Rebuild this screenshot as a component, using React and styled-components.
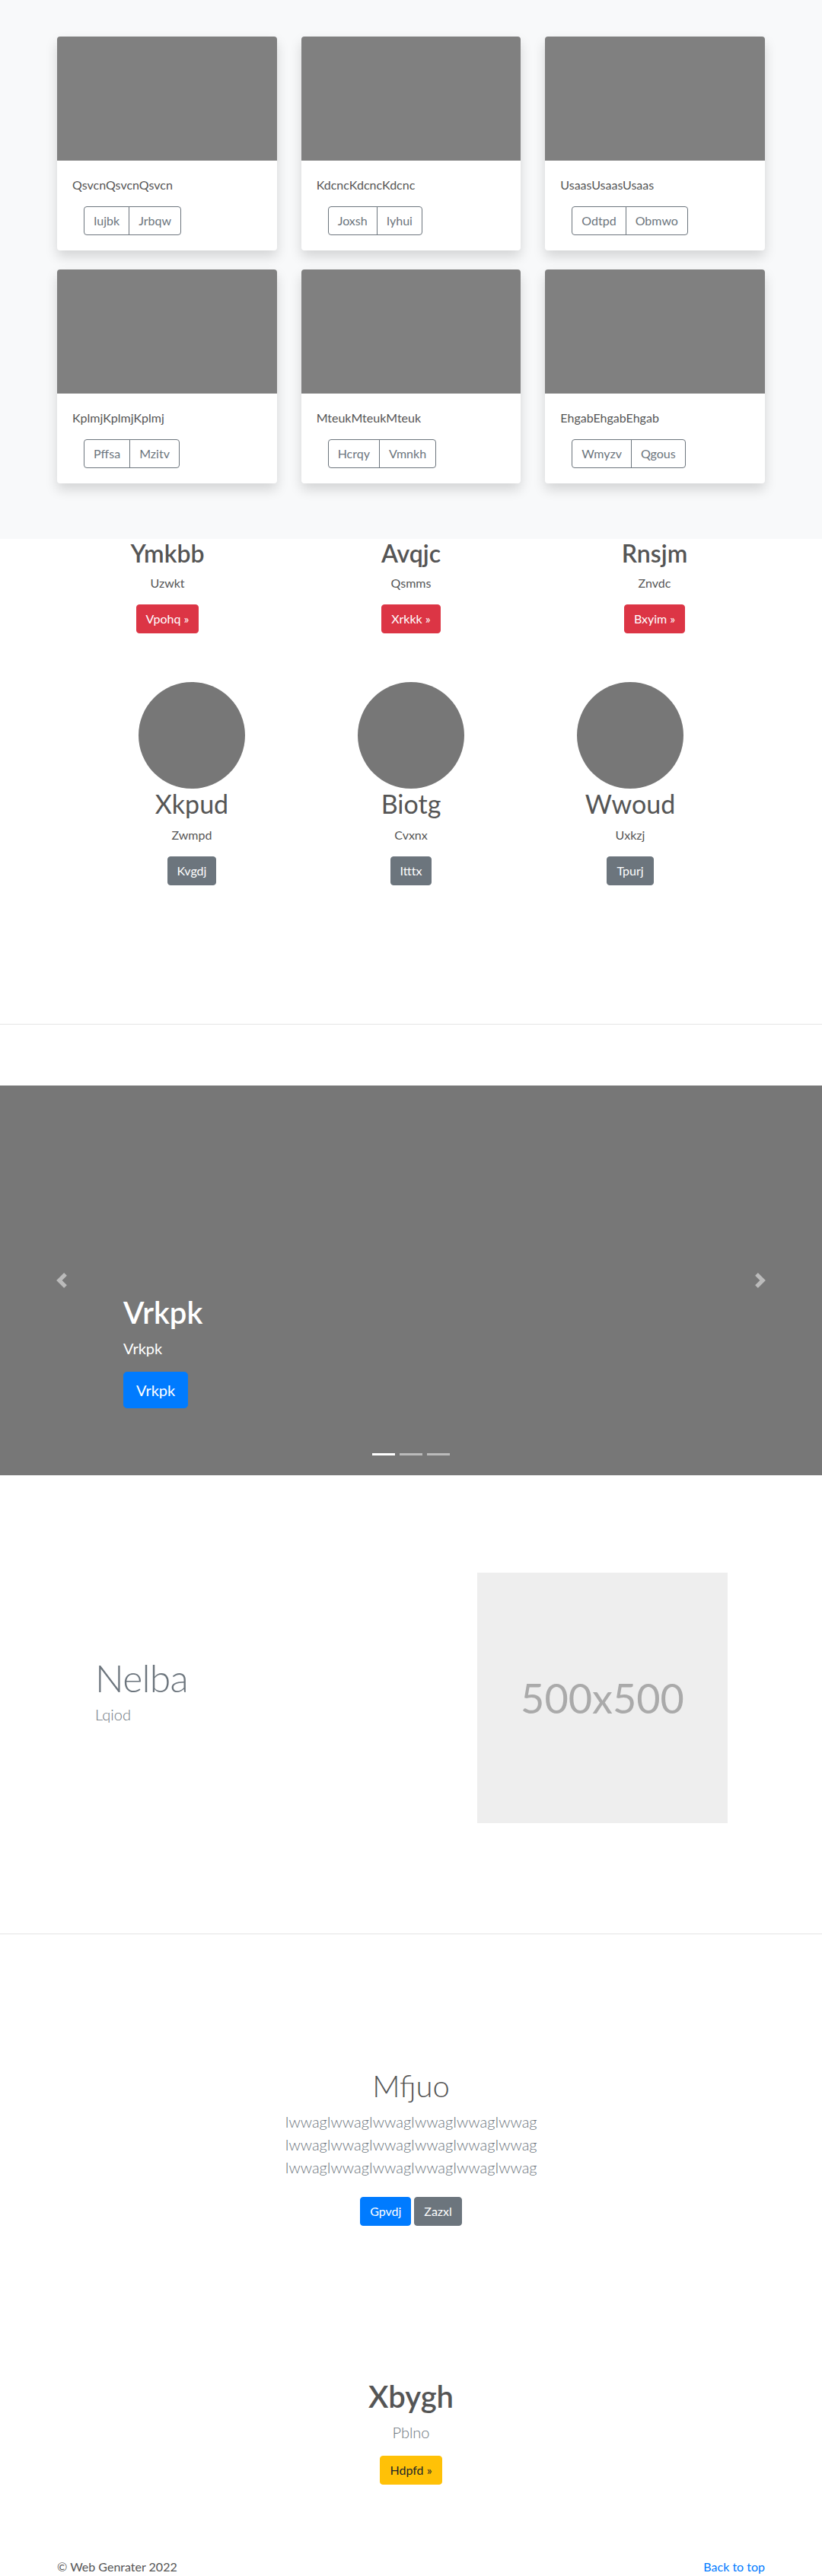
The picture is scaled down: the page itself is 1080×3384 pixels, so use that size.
import React from 'react';
import styled, { createGlobalStyle } from 'styled-components';

const GlobalStyle = createGlobalStyle`
  html, body { margin: 0; padding: 0; }
  body {
    font-family: "Segoe UI", Lato, "Helvetica Neue", Arial, sans-serif;
    font-size: 16px;
    line-height: 1.5;
    color: #555;
    background: #fff;
  }
  *, *::before, *::after { box-sizing: border-box; }
`;

const Container = styled.div`
  width: 960px;
  margin: 0 auto;
  padding: 0 15px;
`;

/* ---------- Album ---------- */
const AlbumSection = styled.section`
  background: #f8f9fa;
  padding: 48px 0 73px;
`;

const CardGrid = styled.div`
  display: grid;
  grid-template-columns: repeat(3, 1fr);
  column-gap: 32px;
  row-gap: 25px;
`;

const Card = styled.div`
  background: #fff;
  border-radius: 4px;
  box-shadow: 0 8px 16px rgba(0, 0, 0, 0.15);
  overflow: hidden;
`;

const CardImage = styled.div`
  height: 163px;
  background: #808080;
`;

const CardBody = styled.div`
  padding: 20px;
`;

const CardText = styled.p`
  margin: 0 0 16px;
  font-size: 16px;
  line-height: 24px;
  color: #555;
`;

const BtnGroup = styled.div`
  display: inline-flex;
  margin-left: 15px;
`;

const OutlineBtn = styled.button`
  font-family: inherit;
  font-size: 16px;
  line-height: 24px;
  padding: 6px 12px;
  border: 1px solid #6c757d;
  color: #6c757d;
  background: transparent;
  cursor: pointer;
  &:first-child { border-radius: 4px 0 0 4px; }
  &:last-child { border-radius: 0 4px 4px 0; margin-left: -1px; }
`;

/* ---------- Buttons ---------- */
const Btn = styled.a`
  display: inline-block;
  font-size: ${(p) => (p.$lg ? 20 : 16)}px;
  line-height: ${(p) => (p.$lg ? 30 : 24)}px;
  padding: ${(p) => (p.$lg ? '8px 16px' : '6px 12px')};
  border: 1px solid ${(p) => p.$bg};
  border-radius: ${(p) => (p.$lg ? 4.8 : 4)}px;
  background: ${(p) => p.$bg};
  color: ${(p) => p.$fg || '#fff'};
  text-decoration: none;
  white-space: nowrap;
`;

/* ---------- Features ---------- */
const FeatureSection = styled.section`
  padding-bottom: 182px;
`;

const FeatureRow = styled.div`
  width: ${(p) => p.$w}px;
  margin: ${(p) => p.$mt}px auto 0;
  display: grid;
  grid-template-columns: repeat(3, 1fr);
`;

const FeatureCol = styled.div`
  display: flex;
  flex-direction: column;
  align-items: center;
  text-align: center;
`;

const Circle = styled.div`
  width: 140px;
  height: 140px;
  border-radius: 50%;
  background: #777;
`;

const FeatureTitle = styled.h2`
  margin: 0 0 8px;
  font-size: ${(p) => p.$size}px;
  font-weight: ${(p) => p.$weight};
  line-height: 1.2;
  color: #555;
`;

const FeatureText = styled.p`
  margin: 0 0 16px;
  font-size: 16px;
  line-height: 24px;
  color: #555;
`;

const Divider = styled.hr`
  margin: 0;
  border: 0;
  border-top: 1px solid rgba(0, 0, 0, 0.1);
`;

/* ---------- Carousel ---------- */
const Carousel = styled.section`
  position: relative;
  margin-top: 80px;
  height: 512px;
  background: #777;
  overflow: hidden;
  color: #fff;
`;

const Caption = styled.div`
  position: absolute;
  left: 15%;
  right: 15%;
  bottom: 88px;
  display: flex;
  flex-direction: column;
  align-items: flex-start;
`;

const CaptionTitle = styled.h1`
  margin: 0 0 8px;
  font-size: 40px;
  line-height: 48px;
  font-weight: 600;
  color: #fff;
`;

const CaptionText = styled.p`
  margin: 0 0 16px;
  font-size: 20px;
  line-height: 30px;
  color: #fff;
`;

const Control = styled.a`
  position: absolute;
  top: 0;
  bottom: 0;
  ${(p) => p.$side}: 0;
  width: 15%;
  display: flex;
  align-items: center;
  justify-content: center;
  opacity: 0.5;
`;

const Indicators = styled.ol`
  position: absolute;
  left: 0;
  right: 0;
  bottom: 26px;
  margin: 0;
  padding: 0;
  list-style: none;
  display: flex;
  justify-content: center;
`;

const Indicator = styled.li`
  width: 30px;
  height: 3px;
  margin: 0 3px;
  background: #fff;
  opacity: ${(p) => (p.$active ? 1 : 0.5)};
`;

/* ---------- Featurette ---------- */
const Featurette = styled.section`
  width: 960px;
  margin: 128px auto 145px;
  padding: 0 64px 0 65px;
  display: grid;
  grid-template-columns: 1fr 329px;
  align-items: center;
`;

const FeaturetteTitle = styled.h2`
  margin: 0 0 8px;
  font-size: 50px;
  line-height: 1;
  font-weight: 300;
  letter-spacing: -0.8px;
  color: #6c757d;
`;

const Lead = styled.p`
  margin: 0 0 16px;
  font-size: 20px;
  line-height: 30px;
  font-weight: 300;
  color: #6c757d;
`;

const Placeholder = styled.div`
  width: 329px;
  height: 329px;
  background: #eee;
  color: #aaa;
  display: flex;
  align-items: center;
  justify-content: center;
  font-size: 54px;
`;

/* ---------- Hero blocks ---------- */
const Hero = styled.section`
  padding: ${(p) => p.$pt}px 0 ${(p) => p.$pb}px;
  text-align: center;
`;

const HeroTitle = styled.h1`
  margin: 0 0 8px;
  font-size: 40px;
  line-height: 48px;
  font-weight: ${(p) => p.$weight};
  color: #555;
`;

const ButtonRow = styled.div`
  display: flex;
  justify-content: center;
  gap: 4px;
  padding: ${(p) => (p.$spaced ? '8px 0' : '0')};
`;

/* ---------- Footer ---------- */
const Footer = styled.footer`
  padding: 48px 0;
`;

const FooterInner = styled(Container)`
  display: flex;
  justify-content: space-between;
  align-items: flex-start;
`;

const FooterText = styled.p`
  margin: 0;
  font-size: 16px;
  line-height: 24px;
  color: #555;
`;

const FooterLink = styled.a`
  font-size: 16px;
  line-height: 24px;
  color: #007bff;
  text-decoration: none;
`;

const Chevron = ({ dir }) => (
  <svg width="20" height="20" viewBox="0 0 8 8" fill="#fff">
    {dir === 'prev' ? (
      <path d="M5.25 0l-4 4 4 4 1.5-1.5L4.25 4l2.5-2.5L5.25 0z" />
    ) : (
      <path d="M2.75 0l-1.5 1.5L3.75 4l-2.5 2.5L2.75 8l4-4-4-4z" />
    )}
  </svg>
);

const cards = [
  { t: 'QsvcnQsvcnQsvcn', a: 'Iujbk', b: 'Jrbqw' },
  { t: 'KdcncKdcncKdcnc', a: 'Joxsh', b: 'Iyhui' },
  { t: 'UsaasUsaasUsaas', a: 'Odtpd', b: 'Obmwo' },
  { t: 'KplmjKplmjKplmj', a: 'Pffsa', b: 'Mzitv' },
  { t: 'MteukMteukMteuk', a: 'Hcrqy', b: 'Vmnkh' },
  { t: 'EhgabEhgabEhgab', a: 'Wmyzv', b: 'Qgous' },
];

const features = [
  { h: 'Ymkbb', p: 'Uzwkt', b: 'Vpohq' },
  { h: 'Avqjc', p: 'Qsmms', b: 'Xrkkk' },
  { h: 'Rnsjm', p: 'Znvdc', b: 'Bxyim' },
];

const people = [
  { h: 'Xkpud', p: 'Zwmpd', b: 'Kvgdj' },
  { h: 'Biotg', p: 'Cvxnx', b: 'Itttx' },
  { h: 'Wwoud', p: 'Uxkzj', b: 'Tpurj' },
];

const line = 'Iwwag'.repeat(6);

export default function App() {
  return (
    <>
      <GlobalStyle />
      <AlbumSection>
        <Container>
          <CardGrid>
            {cards.map((c) => (
              <Card key={c.t}>
                <CardImage />
                <CardBody>
                  <CardText>{c.t}</CardText>
                  <BtnGroup>
                    <OutlineBtn>{c.a}</OutlineBtn>
                    <OutlineBtn>{c.b}</OutlineBtn>
                  </BtnGroup>
                </CardBody>
              </Card>
            ))}
          </CardGrid>
        </Container>
      </AlbumSection>

      <FeatureSection>
        <FeatureRow $w={960} $mt={0}>
          {features.map((f) => (
            <FeatureCol key={f.h}>
              <FeatureTitle $size={32} $weight={600}>{f.h}</FeatureTitle>
              <FeatureText>{f.p}</FeatureText>
              <Btn href="#" $bg="#dc3545">{f.b} &raquo;</Btn>
            </FeatureCol>
          ))}
        </FeatureRow>
        <FeatureRow $w={864} $mt={64}>
          {people.map((f) => (
            <FeatureCol key={f.h}>
              <Circle />
              <FeatureTitle $size={34} $weight={400}>{f.h}</FeatureTitle>
              <FeatureText>{f.p}</FeatureText>
              <Btn href="#" $bg="#6c757d">{f.b}</Btn>
            </FeatureCol>
          ))}
        </FeatureRow>
      </FeatureSection>

      <Divider />

      <Carousel>
        <Caption>
          <CaptionTitle>Vrkpk</CaptionTitle>
          <CaptionText>Vrkpk</CaptionText>
          <Btn href="#" $lg $bg="#007bff">Vrkpk</Btn>
        </Caption>
        <Control href="#" $side="left"><Chevron dir="prev" /></Control>
        <Control href="#" $side="right"><Chevron dir="next" /></Control>
        <Indicators>
          <Indicator $active />
          <Indicator />
          <Indicator />
        </Indicators>
      </Carousel>

      <Featurette>
        <div>
          <FeaturetteTitle>Nelba</FeaturetteTitle>
          <Lead>Lqiod</Lead>
        </div>
        <Placeholder>500x500</Placeholder>
      </Featurette>

      <Divider />

      <Hero $pt={175} $pb={0}>
        <HeroTitle $weight={300}>Mfjuo</HeroTitle>
        <Lead>
          {line}
          <br />
          {line}
          <br />
          {line}
        </Lead>
        <ButtonRow $spaced>
          <Btn href="#" $bg="#007bff">Gpvdj</Btn>
          <Btn href="#" $bg="#6c757d">Zazxl</Btn>
        </ButtonRow>
      </Hero>

      <Hero $pt={192} $pb={48}>
        <HeroTitle $weight={600}>Xbygh</HeroTitle>
        <Lead>Pblno</Lead>
        <ButtonRow>
          <Btn href="#" $bg="#ffc107" $fg="#212529">Hdpfd &raquo;</Btn>
        </ButtonRow>
      </Hero>

      <Footer>
        <FooterInner>
          <FooterText>&copy; Web Genrater 2022</FooterText>
          <FooterLink href="#">Back to top</FooterLink>
        </FooterInner>
      </Footer>
    </>
  );
}
